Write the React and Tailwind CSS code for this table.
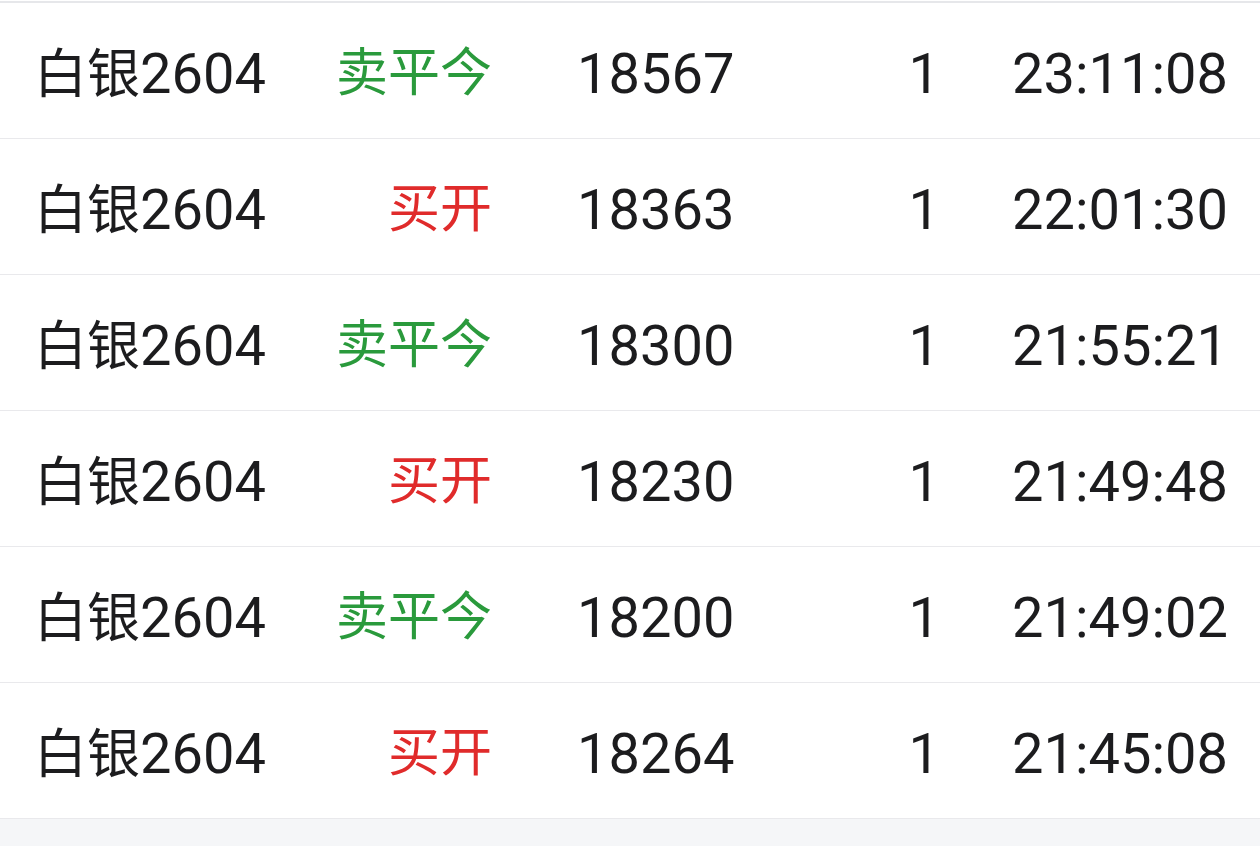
import React from 'react';

// trade records (contract, action, price, qty, time)
const trades = [
    { name: '白银', code: '2604', side: '卖平今', price: '18567', qty: 1, time: '23:11:08' },
    { name: '白银', code: '2604', side: '买开', price: '18363', qty: 1, time: '22:01:30' },
    { name: '白银', code: '2604', side: '卖平今', price: '18300', qty: 1, time: '21:55:21' },
    { name: '白银', code: '2604', side: '买开', price: '18230', qty: 1, time: '21:49:48' },
    { name: '白银', code: '2604', side: '卖平今', price: '18200', qty: 1, time: '21:49:02' },
    { name: '白银', code: '2604', side: '买开', price: '18264', qty: 1, time: '21:45:08' },
];

const TradeRow = ({ t }) => {
    const isBuy = t.side.startsWith('买');
    return (
        <div className="flex items-center h-[136px] pt-[6px] border-b border-[#e9e9ec] bg-white">
            <div className="w-[300px] pl-[34px] text-[#1c1c1e]">
                <span className="text-[53px]">{t.name}</span>
                {t.code}
            </div>
            <div className={`w-[192px] text-right text-[52px] ${isBuy ? 'text-[#e02b2b]' : 'text-[#2a9a3c]'}`}>
                {t.side}
            </div>
            <div className="w-[200px] ml-[85px] text-[#1c1c1e]">{t.price}</div>
            <div className="w-[163px] text-right text-[#1c1c1e]">{t.qty}</div>
            <div className="flex-1 text-right pr-[32px] text-[#1c1c1e]">{t.time}</div>
        </div>
    );
};

const App = () => {
    return (
        <div
            className="min-h-[846px] bg-[#f5f6f8] text-[56px] leading-none"
            style={{ fontFamily: 'Roboto, "Noto Sans CJK SC", sans-serif' }}
        >
            <div className="bg-white pt-px">
                <div className="border-t-2 border-[#e6e7ea]">
                    {trades.map((t, i) => (
                        <TradeRow key={i} t={t} />
                    ))}
                </div>
            </div>
        </div>
    );
};

export default App;
